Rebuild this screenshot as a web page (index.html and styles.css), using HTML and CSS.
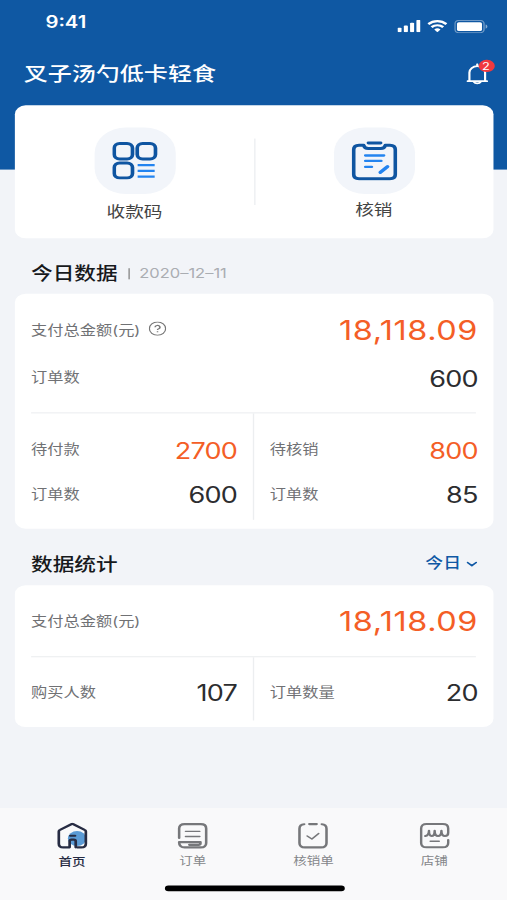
FILE: index.html
```html
<!DOCTYPE html>
<html lang="zh-CN">
<head>
<meta charset="utf-8">
<title>叉子汤勺低卡轻食</title>
<link rel="stylesheet" href="styles.css">
</head>
<body>
<div class="screen">
  <header class="header">
    <div class="status">
      <span class="time">9:41</span>
      <div class="status-icons">
        <svg width="17" height="11" viewBox="0 0 17 11" fill="#fff"><rect x="0" y="7" width="3" height="4" rx=".8"/><rect x="4.7" y="5" width="3" height="6" rx=".8"/><rect x="9.3" y="2.5" width="3" height="8.5" rx=".8"/><rect x="14" y="0" width="3" height="11" rx=".8"/></svg>
        <svg width="15" height="11" viewBox="0 0 15 11" fill="none" stroke="#fff" stroke-width="2"><path d="M.8 3.8a9.6 9.6 0 0 1 13.4 0M3.2 6.5a6.2 6.2 0 0 1 8.6 0"/><path d="M7.5 11 5.2 8.6a3.3 3.3 0 0 1 4.6 0z" fill="#fff" stroke="none"/></svg>
        <svg width="25" height="12" viewBox="0 0 25 12"><rect x=".5" y=".5" width="21.5" height="11" rx="2.8" fill="none" stroke="#fff" stroke-opacity=".4"/><rect x="2" y="2" width="18.5" height="8" rx="1.4" fill="#fff"/><path d="M23.2 4v4c.8-.3 1.3-1.1 1.3-2s-.5-1.7-1.3-2z" fill="#fff" fill-opacity=".5"/></svg>
      </div>
    </div>
    <div class="title-bar">
      <h1 class="title">叉子汤勺低卡轻食</h1>
      <div class="bell">
        <svg width="16" height="20" viewBox="0 0 16 20" fill="none" stroke="#fff" stroke-width="1.6" stroke-linecap="round" stroke-linejoin="round"><path d="M8 .9v1.5M.8 16.2h14.4M2.2 16V8.5a5.8 5.8 0 0 1 11.6 0V16M5.500 16.800a2.700 2.300 0 0 0 5 0"/></svg>
        <span class="badge">2</span>
      </div>
    </div>
  </header>

  <main class="content">
    <section class="card actions">
      <div class="action">
        <div class="tile">
          <svg width="34" height="34" viewBox="0 0 34 34" fill="none" stroke="#0f55a1" stroke-width="2.700"><rect x="1.500" y="1.500" width="13.500" height="14" rx="4"/><rect x="18.500" y="1.500" width="13.500" height="14" rx="4"/><rect x="1.500" y="19" width="13.500" height="13.500" rx="4"/><path d="M18.800 21h12.600M18.800 26.200h12.600M18.800 31.400h12.600" stroke="#2384f0" stroke-width="2.100"/></svg>
        </div>
        <span class="action-label">收款码</span>
      </div>
      <div class="actions-rule"></div>
      <div class="action">
        <div class="tile">
          <svg width="34" height="36" viewBox="0 0 34 36" fill="none" stroke="#0f55a1" stroke-width="2.700" stroke-linecap="round" stroke-linejoin="round"><path d="M9 4H5.600Q1.600 4 1.600 8.200v22Q1.600 34.200 5.600 34.200h22.800q4 0 4-4v-22Q32.400 4 28.400 4H25q-.6 3-3.400 3h-9.200Q9.600 7 9 4z"/><path d="M12.500 2h9"/><g stroke="#2384f0" stroke-width="2.100"><path d="M10.200 13.300h13.800M10.200 18.200h11.800M10.200 23.600h4.800"/><path d="M21.300 28.600 26.600 23.400" stroke-width="2.800"/></g></svg>
        </div>
        <span class="action-label action-label-raised">核销</span>
      </div>
    </section>

    <div class="section-head head-today">
      <h2>今日数据</h2><i class="bar"></i><span class="date">2020–12–11</span>
    </div>
    <section class="card today">
      <div class="row row-total"><span class="label">支付总金额(元)
        <svg class="help" width="13" height="13" viewBox="0 0 13 13" fill="none" stroke="#777" stroke-width=".9"><circle cx="6.500" cy="6.500" r="6"/><path d="M4.700 5.300a1.800 1.600 0 1 1 2.700 1.300q-.9.400-.9 1.200M6.500 8.800v1" stroke-width="1.100"/></svg></span>
        <b class="num big hot">18,118.09</b></div>
      <div class="row row-orders"><span class="label">订单数</span><b class="num">600</b></div>
      <div class="split">
        <div class="col">
          <div class="row"><span class="label">待付款</span><b class="num hot">2700</b></div>
          <div class="row"><span class="label">订单数</span><b class="num">600</b></div>
        </div>
        <div class="col">
          <div class="row"><span class="label">待核销</span><b class="num hot">800</b></div>
          <div class="row"><span class="label">订单数</span><b class="num">85</b></div>
        </div>
      </div>
    </section>

    <div class="section-head head-stats">
      <h2>数据统计</h2>
      <span class="picker"><span class="picker-text">今日</span><svg width="8" height="6" viewBox="0 0 8 6" fill="none" stroke="#0f58a5" stroke-width="1.400" stroke-linecap="round" stroke-linejoin="round"><path d="M.8 1.500 4 4.300l3.200-2.800"/></svg></span>
    </div>
    <section class="card stats">
      <div class="row row-sum"><span class="label">支付总金额(元)</span><b class="num big hot">18,118.09</b></div>
      <div class="split">
        <div class="col"><div class="row"><span class="label">购买人数</span><b class="num">107</b></div></div>
        <div class="col"><div class="row"><span class="label">订单数量</span><b class="num">20</b></div></div>
      </div>
    </section>
  </main>

  <nav class="tabs">
    <div class="tab active">
      <svg width="23" height="24" viewBox="0 0 23 24" fill="none" stroke="#272c43" stroke-width="2" stroke-linejoin="round" stroke-linecap="round"><circle cx="15" cy="14.500" r="6.800" fill="#5b9bd5" stroke="none"/><path d="M15 22.500h3.200q3.300 0 3.300-3.300V8.200q0-1-.9-1.500L12.300 1.600q-.8-.5-1.600 0L2.400 6.700q-.9.500-.9 1.500v11q0 3.300 3.300 3.300h4.700V17q0-1.500 1.500-1.500h1.500q1.500 0 1.500 1.500v5.500M10 12h3.500"/></svg>
      <span>首页</span>
    </div>
    <div class="tab">
      <svg width="23" height="24" viewBox="0 0 23 24" fill="none" stroke="#76777a" stroke-width="1.900" stroke-linejoin="round" stroke-linecap="round"><path d="M1.500 14V5.500q0-4 4-4h12q4 0 4 4v13q0 4-4 4H5.500q-4 0-4-4.700H17.300v1q0 1.400-1.500 1.400H9"/><path d="M6.200 8h10.600M6.200 12.700h10.600" stroke-width="1.200"/></svg>
      <span>订单</span>
    </div>
    <div class="tab">
      <svg width="23" height="24" viewBox="0 0 23 24" fill="none" stroke="#76777a" stroke-width="1.900" stroke-linejoin="round" stroke-linecap="round"><path d="M5 1.600q-3.500.3-3.500 4v12.900q0 4 4 4h12q4 0 4-4V5.600q0-3.700-3.500-4M8.800 1.500h5.400"/><path d="M7.200 12.200l3.500 2.800 5-5" stroke-width="1.300"/></svg>
      <span>核销单</span>
    </div>
    <div class="tab">
      <svg width="23" height="24" viewBox="0 0 23 24" fill="none" stroke="#76777a" stroke-width="1.900" stroke-linejoin="round" stroke-linecap="round"><path d="M21.500 15.800v2.700q0 4-4 4h-12q-4 0-4-4v-13q0-4 4-4h12q4 0 4 4v3.800q0 3-2.400 3-2.500 0-2.600-4.800-.1 4.800-2.500 4.800T11.500 7.500Q11.400 12.300 9.300 12.300T7.300 7.500Q7.200 11.800 4.500 12.300" stroke-width="1.800"/><path d="M8.300 16.900h6.500" stroke-width="1.400"/></svg>
      <span>店铺</span>
    </div>
    <i class="home-indicator"></i>
  </nav>
</div>
</body>
</html>
```
FILE: styles.css
```css
* { box-sizing: border-box; }
html, body { margin: 0; width: 507px; height: 900px; overflow: hidden; background: #f2f4f8; }
h1, h2 { margin: 0; font-weight: 500; }
svg { display: block; flex: none; }
b { font-weight: 400; }

/* 375 x 812 design canvas, stretched to fill the window */
.screen {
  width: 375px; height: 812px;
  display: flex; flex-direction: column;
  transform: scale(1.352, 1.1084); transform-origin: 0 0;
  font-family: Inter, "Noto Sans CJK SC", sans-serif;
  background: #f2f4f8; color: #333;
}

.header { height: 153px; flex: none; background: #0f58a3; color: #fff; }
.status { display: flex; justify-content: space-between; padding: 10px 14px 0 33.600px; height: 40px; }
.time { font-size: 15px; font-weight: 600; line-height: 20px; }
.status-icons { display: flex; gap: 5px; align-items: center; height: 27px; }
.title-bar { display: flex; justify-content: space-between; align-items: center; height: 54px; padding: 0 14px 0 17.500px; }
.title { font-size: 17.800px; line-height: 26px; }
.bell { position: relative; }
.badge {
  position: absolute; left: 8.500px; top: -3.500px; width: 12px; height: 11.500px;
  border-radius: 50%; background: #f0393f; font-size: 9.500px; line-height: 11.500px; text-align: center;
}

.content { flex: 1; margin-top: -58px; padding: 0 10.500px; }
.card { background: #fff; border-radius: 8px; }

.actions { height: 120px; display: grid; grid-template-columns: 1fr 1px 1fr; padding: 20px 0 0 1px; }
.action { display: flex; flex-direction: column; align-items: center; }
.tile { width: 60px; height: 60px; border-radius: 23px; background: #f2f5fa; display: flex; align-items: center; justify-content: center; }
.action-label { font-size: 13.800px; line-height: 20px; margin-top: 6px; color: #444; }
.action-label-raised { margin-top: 4px; }
.actions-rule { margin-top: 10px; height: 60px; background: #eceef1; }

.section-head { display: flex; align-items: center; padding: 0 12.500px; height: 50px; }
.section-head h2 { font-size: 16px; line-height: 24px; color: #17191c; }
.head-today { padding-top: 13.500px; }
.bar { width: 1px; height: 10px; margin: 0 7.500px; background: #888; }
.date { font-size: 12.200px; color: #aaadb2; }
.head-stats { justify-content: space-between; height: 50.500px; padding-top: 13.500px; }
.picker { display: flex; align-items: center; gap: 4px; margin-right: -1px; font-size: 13.200px; font-weight: 500; color: #0f58a5; }
.picker-text { padding-bottom: 5px; }

.today { height: 212px; padding: 12px 12.500px 0; }
.stats { height: 128px; padding: 12px 12.500px 0; }
.row { display: flex; align-items: center; justify-content: space-between; height: 40px; }
.row-total { height: 42px; }
.row-orders { height: 44px; margin-bottom: 9px; }
.row-sum { height: 42px; margin-bottom: 10px; }
.label { display: flex; align-items: center; gap: 6px; padding-bottom: 3px; font-size: 12px; color: #707174; }
.num { margin-right: -1.300px; padding-top: 1.500px; font-size: 20px; letter-spacing: -.6px; color: #2c2d2f; }
.num.big { padding-top: 0; margin-right: -1.500px; font-size: 24px; letter-spacing: .4px; }
.num.hot { color: #f45e26; }
.split { display: grid; grid-template-columns: 1fr 1fr; border-top: 1px solid #eceef0; }
.today .split { height: 97px; }
.stats .split { height: 58px; }
.today .col { padding-top: 13px; }
.stats .col { padding-top: 12px; }
.col:first-child { padding-right: 12.500px; border-right: 1px solid #eceef0; }
.col:last-child { padding-left: 12px; }

.tabs {
  position: relative; height: 83px; flex: none; background: #f9f9fa;
  display: grid; grid-template-columns: repeat(4, 89.300px); padding: 13px 8.700px 0;
}
.tab { display: flex; flex-direction: column; align-items: center; font-size: 10px; line-height: 14px; color: #85878a; }
.tab span { margin-top: 2.500px; }
.tab.active { color: #272c43; font-weight: 500; }
.tab.active span { margin-top: 3.500px; }
.home-indicator { position: absolute; left: 121.500px; top: 69.500px; width: 133.500px; height: 5px; border-radius: 3px; background: #000; }
```
